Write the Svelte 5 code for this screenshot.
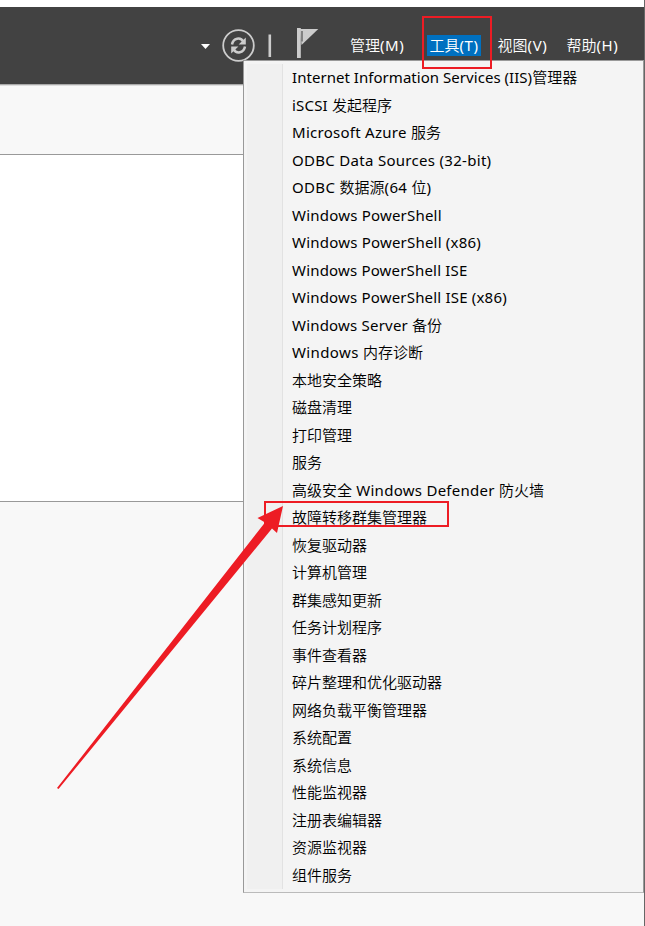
<script lang="ts">
  // Server Manager header with the Tools menu open
  interface Tool {
    name: string;
    /** extra letter spacing of the Latin part, px */
    track?: number;
  }

  const menus = [
    { label: '管理(M)' },
    { label: '工具(T)', open: true },
    { label: '视图(V)' },
    { label: '帮助(H)' }
  ];

  const tools: Tool[] = [
    { name: 'Internet Information Services (IIS)管理器', track: 0.04 },
    { name: 'iSCSI 发起程序', track: 0.2 },
    { name: 'Microsoft Azure 服务', track: 0.27 },
    { name: 'ODBC Data Sources (32-bit)', track: 0.3 },
    { name: 'ODBC 数据源(64 位)', track: 0.35 },
    { name: 'Windows PowerShell', track: 0.21 },
    { name: 'Windows PowerShell (x86)', track: 0.21 },
    { name: 'Windows PowerShell ISE', track: 0.18 },
    { name: 'Windows PowerShell ISE (x86)', track: 0.19 },
    { name: 'Windows Server 备份', track: 0.2 },
    { name: 'Windows 内存诊断', track: 0.38 },
    { name: '本地安全策略' },
    { name: '磁盘清理' },
    { name: '打印管理' },
    { name: '服务' },
    { name: '高级安全 Windows Defender 防火墙', track: 0.28 },
    { name: '故障转移群集管理器' },
    { name: '恢复驱动器' },
    { name: '计算机管理' },
    { name: '群集感知更新' },
    { name: '任务计划程序' },
    { name: '事件查看器' },
    { name: '碎片整理和优化驱动器' },
    { name: '网络负载平衡管理器' },
    { name: '系统配置' },
    { name: '系统信息' },
    { name: '性能监视器' },
    { name: '注册表编辑器' },
    { name: '资源监视器' },
    { name: '组件服务' }
  ];

  // runs of Latin and of Chinese characters
  function runs(name: string) {
    return name.match(/[\x20-\x7e]+|[^\x20-\x7e]+/g) ?? [];
  }

  function isLatin(run: string) {
    return run.charCodeAt(0) < 0x7f;
  }
</script>

{#snippet mixed(text: string, track: number)}
  {#each runs(text) as run, i (i)}{#if isLatin(run)}<span
        class="latin"
        style:letter-spacing="{track}px">{run}</span>{:else}<span>{run}</span>{/if}{/each}
{/snippet}

<div class="window">
  <header class="header">
    <svg class="icons" width="134" height="40" viewBox="0 0 134 40" aria-hidden="true">
      <path d="M1 19h9l-4.5 5z" fill="#fff" />
      <circle cx="38.5" cy="20.5" r="15.3" fill="none" stroke="#ccc" stroke-width="1.8" />
      <g fill="none" stroke="#ccc" stroke-width="2.5">
        <path d="M32 19.5c1.2-6.8 8.7-7.8 11.5-2.7" />
        <path d="M45 21.5c-1.2 6.8-8.7 7.8-11.5 2.7" />
      </g>
      <path d="M45.8 12.5v7h-7.2zM31.2 28.5v-7h7.2z" fill="#ccc" />
      <path d="M68.5 9.5h2.6v22.5h-2.6z" fill="#ccc" />
      <path d="M97 3h3.8v30H97z" fill="#ccc" />
      <path d="M100 4h18.3L101.5 20z" fill="#ccc" />
      <path d="M102 6v10.5" stroke="#5a5a5a" stroke-width="1.3" />
    </svg>
    <nav class="menubar">
      {#each menus as menu (menu.label)}
        <span class="menubar__item" class:menubar__item--open={menu.open}>{@render mixed(menu.label, 0.6)}</span>
      {/each}
    </nav>
  </header>
  <div class="toolbar"></div>
  <div class="panel"></div>

  <ul class="menu">
    {#each tools as tool (tool.name)}
      <li class="menu__item">{@render mixed(tool.name, tool.track ?? 0)}</li>
    {/each}
  </ul>

  <!-- red marks over the menu -->
  <svg class="marks" width="645" height="926" viewBox="0 0 645 926" aria-hidden="true">
    <g fill="none" stroke="#ed1c24" stroke-width="2">
      <path d="M423 17h68v51h-68z" />
      <path d="M265 502h183v24H265z" />
    </g>
    <path d="M283 506L257.500 518L265 522.500L57 788L58.500 789L272 528.500L277 533z" fill="#ed1c24" />
  </svg>
</div>

<style>
  :global(body) {
    margin: 0;
  }

  .window {
    position: relative;
    box-sizing: border-box;
    width: 645px;
    height: 926px;
    padding-top: 7px;
    border-right: 1px solid #666;
    background: linear-gradient(#fff 7px, #f8f8f8 7px);
    font-family: 'Noto Sans', 'Noto Sans CJK SC', sans-serif;
    font-size: 15px;
    font-weight: 350;
    overflow: hidden;
  }

  .latin {
    font-weight: 400;
  }

  .header {
    display: flex;
    align-items: flex-start;
    box-sizing: border-box;
    height: 78px;
    padding: 18px 0 0 200px;
    background: #424242;
    border-bottom: 1px solid #aaa;
  }

  .icons {
    flex: none;
  }

  .menubar {
    display: flex;
    gap: 15px;
    padding: 10px 0 0 14px;
    color: #fff;
  }

  .menubar__item {
    height: 21px;
    padding: 0 2px;
    line-height: 21px;
    white-space: nowrap;
  }

  .menubar__item--open {
    margin-left: 6px;
    background: #0070c0;
  }

  .toolbar {
    height: 69px;
    border-top: 1px solid #ddd;
    box-sizing: border-box;
  }

  .panel {
    box-sizing: border-box;
    height: 348px;
    background: #fff;
    border-top: 1px solid #999;
    border-bottom: 1px solid #999;
  }

  .menu {
    position: absolute;
    top: 60px;
    left: 243px;
    box-sizing: border-box;
    width: 401px;
    height: 833px;
    margin: 0;
    padding: 3px 0 0 48px;
    list-style: none;
    border: 1px solid #999;
    border-bottom-color: #bbb;
    background:
      linear-gradient(#e2e2e2, #e2e2e2) 38px 3px / 1px 825px no-repeat,
      linear-gradient(#f0f0f0, #f0f0f0) 3px 3px / 35px 825px no-repeat,
      #f4f4f4;
    color: #000;
  }

  .menu__item {
    height: 27.5px;
    line-height: 27.5px;
    white-space: nowrap;
  }

  .marks {
    position: absolute;
    inset: 0;
  }
</style>
